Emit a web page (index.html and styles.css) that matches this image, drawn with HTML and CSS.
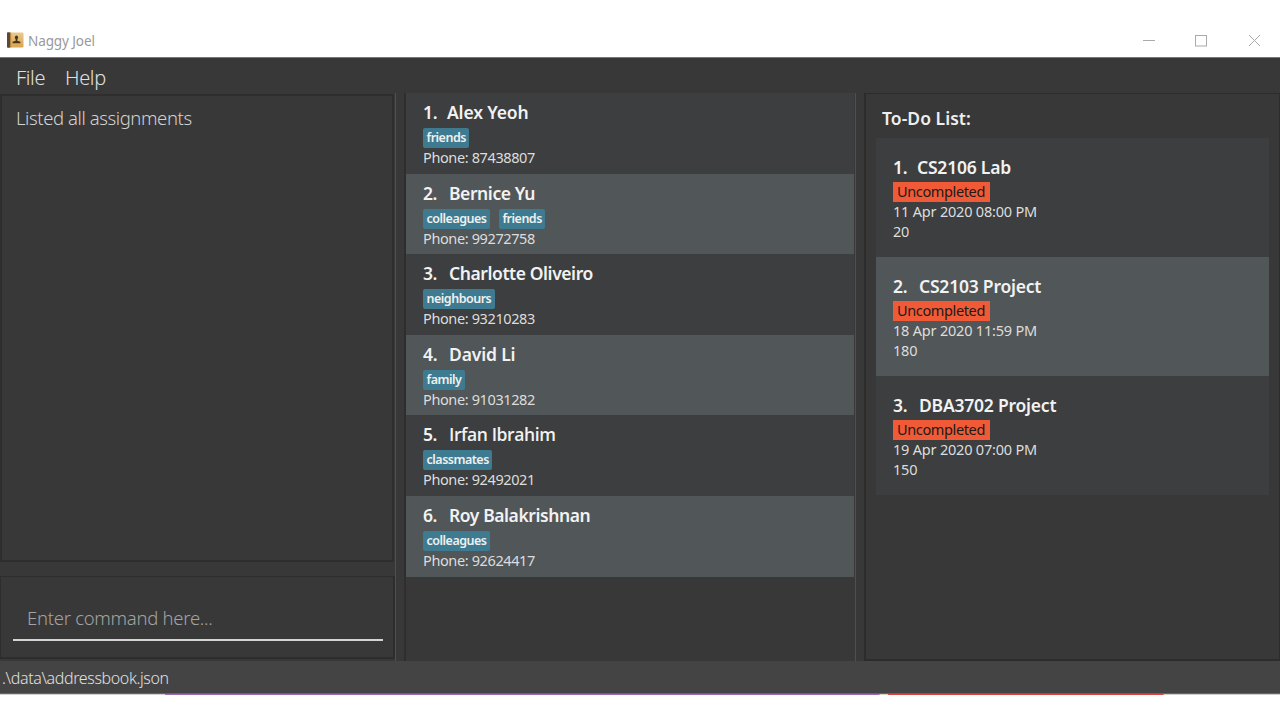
FILE: index.html
```html
<!DOCTYPE html>
<html lang="en">
<head>
<meta charset="utf-8">
<title>Naggy Joel</title>
<link rel="stylesheet" href="styles.css">
</head>
<body>
<div class="window">
  <header class="titlebar">
    <svg class="app-icon" width="17" height="16" viewBox="0 0 17 16">
      <defs><linearGradient id="cover" x1="0" y1="0" x2="0" y2="1"><stop offset="0" stop-color="#ecc88c"/><stop offset="1" stop-color="#d9a650"/></linearGradient></defs>
      <rect x="0.5" y="0.5" width="16" height="15" rx="1.2" fill="url(#cover)"/>
      <rect x="0" y="0.3" width="3" height="15.4" rx="0.8" fill="#5b4836"/>
      <rect x="3" y="0.5" width="1.2" height="15" fill="#b98a45"/>
      <ellipse cx="9.500" cy="5.600" rx="1.600" ry="2.100" fill="#49341e"/>
      <path d="M8.700 7h1.600v1.700l3.100 1v1.600H5.600V9.700l3.100-1z" fill="#49341e"/>
    </svg>
    <span class="app-title">Naggy Joel</span>
    <svg class="controls" width="120" height="14" viewBox="0 0 120 14" fill="none" stroke="#aaa">
      <path d="M1 6.500h12"/>
      <rect x="53.500" y="1.500" width="11" height="10.500"/>
      <path d="M107 1l11 11M118 1l-11 11"/>
    </svg>
  </header>
  <nav class="menubar"><span class="menu-file">File</span><span class="menu-help">Help</span></nav>
  <main class="content">
    <section class="left">
      <div class="result">Listed all assignments</div>
      <div class="command"><div class="field">Enter command here...</div></div>
    </section>
    <section class="people">
      <article class="person"><h2 class="name short"><span class="num first">1.</span><span>Alex Yeoh</span></h2><div class="tags"><span class="tag">friends</span></div><p class="phone">Phone: 87438807</p></article>
      <article class="person"><h2 class="name"><span class="num">2.</span><span>Bernice Yu</span></h2><div class="tags"><span class="tag">colleagues</span><span class="tag">friends</span></div><p class="phone">Phone: 99272758</p></article>
      <article class="person"><h2 class="name"><span class="num">3.</span><span>Charlotte Oliveiro</span></h2><div class="tags"><span class="tag">neighbours</span></div><p class="phone">Phone: 93210283</p></article>
      <article class="person"><h2 class="name short"><span class="num">4.</span><span>David Li</span></h2><div class="tags"><span class="tag">family</span></div><p class="phone">Phone: 91031282</p></article>
      <article class="person"><h2 class="name"><span class="num">5.</span><span class="plain-caps">Irfan Ibrahim</span></h2><div class="tags"><span class="tag">classmates</span></div><p class="phone">Phone: 92492021</p></article>
      <article class="person"><h2 class="name"><span class="num">6.</span><span>Roy Balakrishnan</span></h2><div class="tags"><span class="tag">colleagues</span></div><p class="phone">Phone: 92624417</p></article>
    </section>
    <section class="todo">
      <h1 class="todo-title">To-Do List:</h1>
      <article class="task"><h2 class="name"><span class="num first">1.</span><span>CS2106 Lab</span></h2><span class="status">Uncompleted</span><p class="detail">11 Apr 2020 08:00 PM</p><p class="detail">20</p></article>
      <article class="task"><h2 class="name"><span class="num">2.</span><span>CS2103 Project</span></h2><span class="status">Uncompleted</span><p class="detail">18 Apr 2020 11:59 PM</p><p class="detail">180</p></article>
      <article class="task"><h2 class="name"><span class="num">3.</span><span>DBA3702 Project</span></h2><span class="status">Uncompleted</span><p class="detail">19 Apr 2020 07:00 PM</p><p class="detail">150</p></article>
    </section>
  </main>
  <footer class="statusbar">.\data\addressbook.json</footer>
  <div class="edge"></div>
</div>
</body>
</html>
```
FILE: styles.css
```css
* { box-sizing: border-box; }
body { margin: 0; background: #fff; font-family: "Noto Sans", "Open Sans", sans-serif; color: #ddd; }
h1, h2, p { margin: 0; font-weight: 400; }
.window { width: 1280px; height: 720px; padding-top: 25px; display: flex; flex-direction: column; overflow: hidden; white-space: nowrap; }
.titlebar { height: 32px; display: flex; align-items: center; padding: 0 18px 0 7px; }
.app-icon { margin-top: -2px; }
.app-title { margin-left: 4px; font-size: 13.5px; letter-spacing: -0.1px; color: #999; }
.controls { margin: -1px 0 0 auto; }
.menubar { height: 36px; background: #383838; border-top: 1px solid #777; display: flex; align-items: center; padding: 3px 0 0 16px; font-size: 20px; font-weight: 300; letter-spacing: -0.35px; color: #e0e0e0; }
.menu-file { width: 49px; }
.content { height: 568px; background: #383838; display: grid; grid-template-columns: 396px 452px 416px; column-gap: 8px; }
.left { display: flex; flex-direction: column; gap: 14px; border-right: 1px solid #505050; padding: 1px 0 2px; }
.result { height: 468px; border: 2px solid #2e2e2e; margin-right: 1px; padding: 8px 14px; font-size: 18.5px; line-height: 27px; font-weight: 300; letter-spacing: -0.41px; color: #d2d2d2; }
.command { height: 83px; border: 1px solid #2d2d2d; border-bottom-width: 2px; border-right-width: 2px; padding: 26px 10px 0 12px; }
.field { height: 38px; border-bottom: 2px solid #d4d4d4; padding-left: 14px; font-size: 18.5px; line-height: 29px; font-weight: 300; letter-spacing: -0.28px; color: #a3a3a3; }
.people { border-left: 2px solid #2e2e2e; border-right: 1px solid #505050; padding-right: 1px; }
.person { height: 80.6px; background: #3c3e3f; padding: 7px 17px 0; }
.person:nth-child(even) { background: #515658; }
.name { height: 28px; display: flex; font-size: 17.5px; line-height: 24px; font-weight: 600; letter-spacing: -0.42px; color: #f2f2f2; }
.name.short { letter-spacing: -0.15px; }
.num { width: 26px; }
.num.first { width: 24px; }
.plain-caps { font-family: "Open Sans", sans-serif; letter-spacing: -0.4px; }
.tags { display: flex; gap: 9px; }
.tag { height: 20px; border-radius: 2px; background: #3e7b91; padding: 0 3.500px; font-size: 12.500px; line-height: 20px; font-weight: 600; letter-spacing: -0.5px; color: #f0f0f0; }
.phone, .detail { font-size: 14.500px; line-height: 19px; letter-spacing: -0.38px; color: #ddd; }
.detail { line-height: 19.500px; letter-spacing: -0.2px; }
.todo { border: 1px solid #2c2c2c; border-bottom-width: 2px; border-left-width: 2px; padding: 9px 10px 0 10px; }
.todo-title { height: 35px; padding-left: 6px; line-height: 31px; font-size: 17.5px; font-weight: 600; letter-spacing: 0.05px; color: #eee; }
.task { height: 119px; background: #3c3e3f; padding: 17px 17px 0; }
.task:nth-child(odd) { background: #515658; }
.task .name { height: 27px; letter-spacing: -0.22px; }
.status { display: block; width: 97px; height: 20px; background: #f15a36; padding-left: 4px; font-size: 14.500px; line-height: 19px; letter-spacing: -0.37px; color: #211a18; }
.statusbar { height: 32px; background: #444; padding: 3px 0 0 2px; font-size: 16px; line-height: 29px; font-weight: 300; letter-spacing: -0.37px; color: #e0e0e0; }
.edge { height: 2px; border-top: 1px solid #666; background: linear-gradient(90deg, #d0d0d0 165px, #9b6cb2 165px, #9b6cb2 879px, #d6d2ca 880px, #d6d2ca 888px, #dc4444 888px, #dc4444 1163px, #ccc 1164px); }
```
